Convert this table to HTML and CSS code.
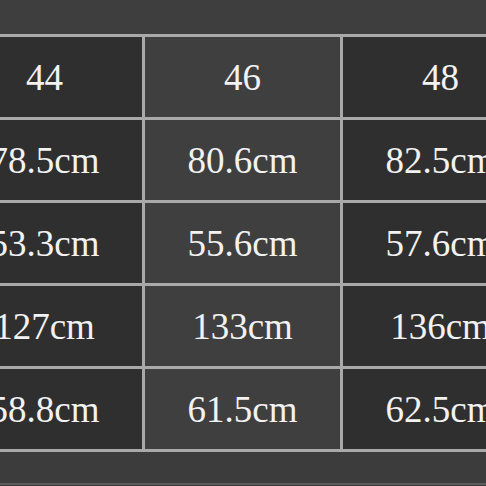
FILE: index.html
```html
<!DOCTYPE html>
<html>
<head>
<meta charset="utf-8">
<link rel="stylesheet" href="styles.css">
</head>
<body>
<div class="page">
  <div class="top"></div>
  <div class="chart">
    <div class="cell dark">44</div>
    <div class="cell light">46</div>
    <div class="cell dark">48</div>
    <div class="cell dark">78.5cm</div>
    <div class="cell light">80.6cm</div>
    <div class="cell dark">82.5cm</div>
    <div class="cell dark">53.3cm</div>
    <div class="cell light">55.6cm</div>
    <div class="cell dark">57.6cm</div>
    <div class="cell dark">127cm</div>
    <div class="cell light">133cm</div>
    <div class="cell dark">136cm</div>
    <div class="cell dark">58.8cm</div>
    <div class="cell light">61.5cm</div>
    <div class="cell dark">62.5cm</div>
  </div>
  <div class="bottom"></div>
</div>
</body>
</html>
```

FILE: styles.css
```css
html, body {
  margin: 0;
  padding: 0;
  background: #3b3b3b;
}
.page {
  width: 486px;
  height: 486px;
  overflow: hidden;
  display: flex;
  flex-direction: column;
  background: linear-gradient(180deg, #3e3e3e 0%, #393939 100%);
}
.top {
  height: 34px;
  flex: none;
}
.chart {
  flex: none;
  margin-left: -56px;
  width: 597px;
  display: grid;
  grid-template-columns: repeat(3, 195px);
  grid-auto-rows: 80px;
  gap: 3px;
  border: 3px solid #a9a9a9;
  background: #a9a9a9;
}
.cell {
  display: flex;
  align-items: center;
  justify-content: center;
  font-family: "Liberation Serif", serif;
  font-size: 37px;
  color: #f2f2f2;
  white-space: nowrap;
}
.dark {
  background: #2f2f2f;
}
.light {
  background: #3f3f3f;
}
.bottom {
  flex: none;
  height: 31px;
  background: #3c3c3c;
  border-bottom: 2px solid #5c5c5c;
}
```
